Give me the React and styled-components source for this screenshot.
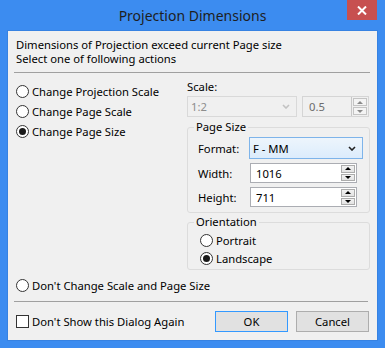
import styled, { createGlobalStyle } from "styled-components";

const GlobalStyle = createGlobalStyle`
  html, body { margin: 0; padding: 0; }
  body {
    font-family: "Noto Sans", "Open Sans", sans-serif;
    font-size: 11.25px;
    color: #000;
  }
  * { box-sizing: border-box; }
`;

const Window = styled.div`
  width: 385px;
  height: 348px;
  background: #3c8cf0;
  display: flex;
  flex-direction: column;
  padding: 0 8px 8px;
`;

const TitleBar = styled.div`
  height: 31px;
  display: grid;
  grid-template-columns: 1fr auto 1fr;
`;

const Title = styled.div`
  grid-column: 2;
  font-size: 14px;
  line-height: 31px;
  color: #1e1e1e;
  white-space: nowrap;
`;

const CloseButton = styled.div`
  grid-column: 3;
  justify-self: end;
  width: 30px;
  height: 20px;
  background: #c75050;
  display: flex;
  align-items: center;
  justify-content: center;
`;

const Client = styled.div`
  flex: 1;
  background: #f0f0f0;
  box-shadow: 0 0 0 1px #3682e2;
  display: flex;
  flex-direction: column;
`;

const Message = styled.div`
  padding: 7px 8px 0;
  line-height: 14px;
`;

const Separator = styled.div`
  height: 1px;
  background: #a0a0a0;
  margin: ${p => p.$top}px ${p => p.$right}px 0 6px;
`;

const Main = styled.div`
  display: flex;
`;

const LeftColumn = styled.div`
  width: 179px;
  padding: ${p => p.$top}px 0 0 8px;
`;

const RightColumn = styled.div`
  width: 183px;
  padding-top: 7px;
`;

const RadioRow = styled.label`
  display: flex;
  align-items: center;
  gap: 3px;
  height: ${p => p.$h || 20}px;
  white-space: nowrap;
`;

const RadioDot = styled.span`
  width: 13px;
  height: 13px;
  flex: none;
  border-radius: 50%;
  border: 1px solid #333;
  background: #fff;
  display: flex;
  align-items: center;
  justify-content: center;
  &::after {
    content: "";
    width: 7px;
    height: 7px;
    border-radius: 50%;
    background: #1a1a1a;
    display: ${p => (p.$checked ? "block" : "none")};
  }
`;

const CheckBox = styled.span`
  width: 13px;
  height: 13px;
  flex: none;
  border: 1px solid #333;
  background: #fff;
`;

const FieldLabel = styled.div`
  line-height: 14px;
  height: 14px;
`;

const ScaleRow = styled.div`
  display: flex;
  gap: 5px;
  margin-top: 2px;
  height: 21px;
`;

const Combo = styled.div`
  width: ${p => p.$w}px;
  height: ${p => p.$h || 21}px;
  display: flex;
  align-items: center;
  justify-content: space-between;
  padding: 0 6px 0 3px;
  border: 1px solid ${p => (p.$disabled ? "#d9d9d9" : "#7eb4ea")};
  background: ${p =>
    p.$disabled ? "#f0f0f0" : "linear-gradient(#edf5fc, #dcecfc)"};
  color: ${p => (p.$disabled ? "#8d8d8d" : "#000")};
`;

const SpinBox = styled.div`
  width: ${p => p.$w}px;
  height: ${p => p.$h}px;
  margin-left: ${p => p.$ml || 0}px;
  display: flex;
  border: 1px solid ${p => (p.$disabled ? "#d5d5d5" : "#abadb3")};
  background: ${p => (p.$disabled ? "#f0f0f0" : "#fff")};
`;

const SpinValue = styled.div`
  flex: 1;
  display: flex;
  align-items: center;
  padding-left: ${p => p.$pl}px;
  color: ${p => (p.$disabled ? "#6d6d6d" : "#000")};
`;

const SpinButtons = styled.div`
  width: 17px;
  display: flex;
  flex-direction: column;
  border-left: 1px solid ${p => (p.$disabled ? "#c8c8c8" : "#fff")};
  padding: 1px;
  gap: 1px;
`;

const SpinButton = styled.div`
  flex: 1;
  display: flex;
  align-items: center;
  justify-content: center;
  border: 1px solid ${p => (p.$disabled ? "#c4c4c4" : "#acacac")};
  background: ${p =>
    p.$disabled ? "#f4f4f4" : "linear-gradient(#f2f2f2, #e3e3e3)"};
`;

const Triangle = styled.span`
  width: 0;
  height: 0;
  border-left: 3px solid transparent;
  border-right: 3px solid transparent;
  ${p =>
    p.$down
      ? `border-top: 3px solid ${p.$disabled ? "#8a8a8a" : "#000"};`
      : `border-bottom: 3px solid ${p.$disabled ? "#8a8a8a" : "#000"};`}
`;

const GroupBox = styled.fieldset`
  margin: ${p => p.$top}px 0 0;
  padding: 0;
  border: 1px solid #dcdcdc;
  border-radius: 3px;
  width: 183px;
`;

const Legend = styled.legend`
  margin-left: 6px;
  padding: 0 2px;
  line-height: 14px;
`;

const GroupBody = styled.div`
  padding: ${p => p.$pad};
  display: flex;
  flex-direction: column;
  gap: ${p => p.$gap || 0}px;
`;

const FormRow = styled.div`
  display: grid;
  grid-template-columns: 51px auto;
  align-items: center;
`;

const Footer = styled.div`
  display: flex;
  align-items: center;
  margin-top: 9px;
  padding: 0 8px;
`;

const CheckRow = styled.label`
  flex: 1;
  display: flex;
  align-items: center;
  gap: 3px;
`;

const Button = styled.div`
  width: 73px;
  height: 21px;
  margin-left: ${p => p.$ml || 0}px;
  display: flex;
  align-items: center;
  justify-content: center;
  border: 1px solid ${p => (p.$default ? "#3399ff" : "#adadad")};
  background: #e1e1e1;
`;

const Chevron = ({ color }) => (
  <svg width="8" height="5" viewBox="0 0 8 5">
    <polyline points="1,1 4,4 7,1" fill="none" stroke={color} strokeWidth="1.6" />
  </svg>
);

const Spinner = ({ value, w, h, ml, pl, disabled }) => (
  <SpinBox $w={w} $h={h} $ml={ml} $disabled={disabled}>
    <SpinValue $pl={pl} $disabled={disabled}>{value}</SpinValue>
    <SpinButtons $disabled={disabled}>
      <SpinButton $disabled={disabled}><Triangle $disabled={disabled} /></SpinButton>
      <SpinButton $disabled={disabled}><Triangle $down $disabled={disabled} /></SpinButton>
    </SpinButtons>
  </SpinBox>
);

const Radio = ({ label, checked, h }) => (
  <RadioRow $h={h}>
    <RadioDot $checked={checked} />
    {label}
  </RadioRow>
);

export default function App() {
  return (
    <>
      <GlobalStyle />
      <Window>
        <TitleBar>
          <Title>Projection Dimensions</Title>
          <CloseButton>
            <svg width="10" height="9" viewBox="0 0 10 9">
              <path d="M1 0.5 L9 8.5 M9 0.5 L1 8.5" stroke="#fff" strokeWidth="2" />
            </svg>
          </CloseButton>
        </TitleBar>
        <Client>
          <Message>
            <div>Dimensions of Projection exceed current Page size</div>
            <div>Select one of following actions</div>
          </Message>
          <Separator $top={6} $right={7} />
          <Main>
            <LeftColumn $top={8}>
              <Radio label="Change Projection Scale" />
              <Radio label="Change Page Scale" />
              <Radio label="Change Page Size" checked />
            </LeftColumn>
            <RightColumn>
              <FieldLabel>Scale:</FieldLabel>
              <ScaleRow>
                <Combo $w={110} $disabled>
                  1:2
                  <Chevron color="#c2c2c2" />
                </Combo>
                <Spinner value="0.5" w={67} h={21} pl={6} disabled />
              </ScaleRow>
              <GroupBox $top={3}>
                <Legend>Page Size</Legend>
                <GroupBody $pad="3px 0 5px 10px" $gap={4}>
                  <FormRow>
                    <span>Format:</span>
                    <Combo $w={114} $h={22}>
                      F - MM
                      <Chevron color="#222" />
                    </Combo>
                  </FormRow>
                  <FormRow>
                    <span>Width:</span>
                    <Spinner value="1016" w={107} h={20} ml={1} pl={5} />
                  </FormRow>
                  <FormRow>
                    <span>Height:</span>
                    <Spinner value="711" w={107} h={20} ml={1} pl={5} />
                  </FormRow>
                </GroupBody>
              </GroupBox>
              <GroupBox $top={2}>
                <Legend>Orientation</Legend>
                <GroupBody $pad="2px 0 2px 12px">
                  <Radio label="Portrait" h={18} />
                  <Radio label="Landscape" h={18} checked />
                </GroupBody>
              </GroupBox>
            </RightColumn>
          </Main>
          <LeftColumn $top={5}>
            <Radio label="Don't Change Scale and Page Size" />
          </LeftColumn>
          <Separator $top={6} $right={9} />
          <Footer>
            <CheckRow>
              <CheckBox />
              Don't Show this Dialog Again
            </CheckRow>
            <Button $default>OK</Button>
            <Button $ml={8}>Cancel</Button>
          </Footer>
        </Client>
      </Window>
    </>
  );
}
